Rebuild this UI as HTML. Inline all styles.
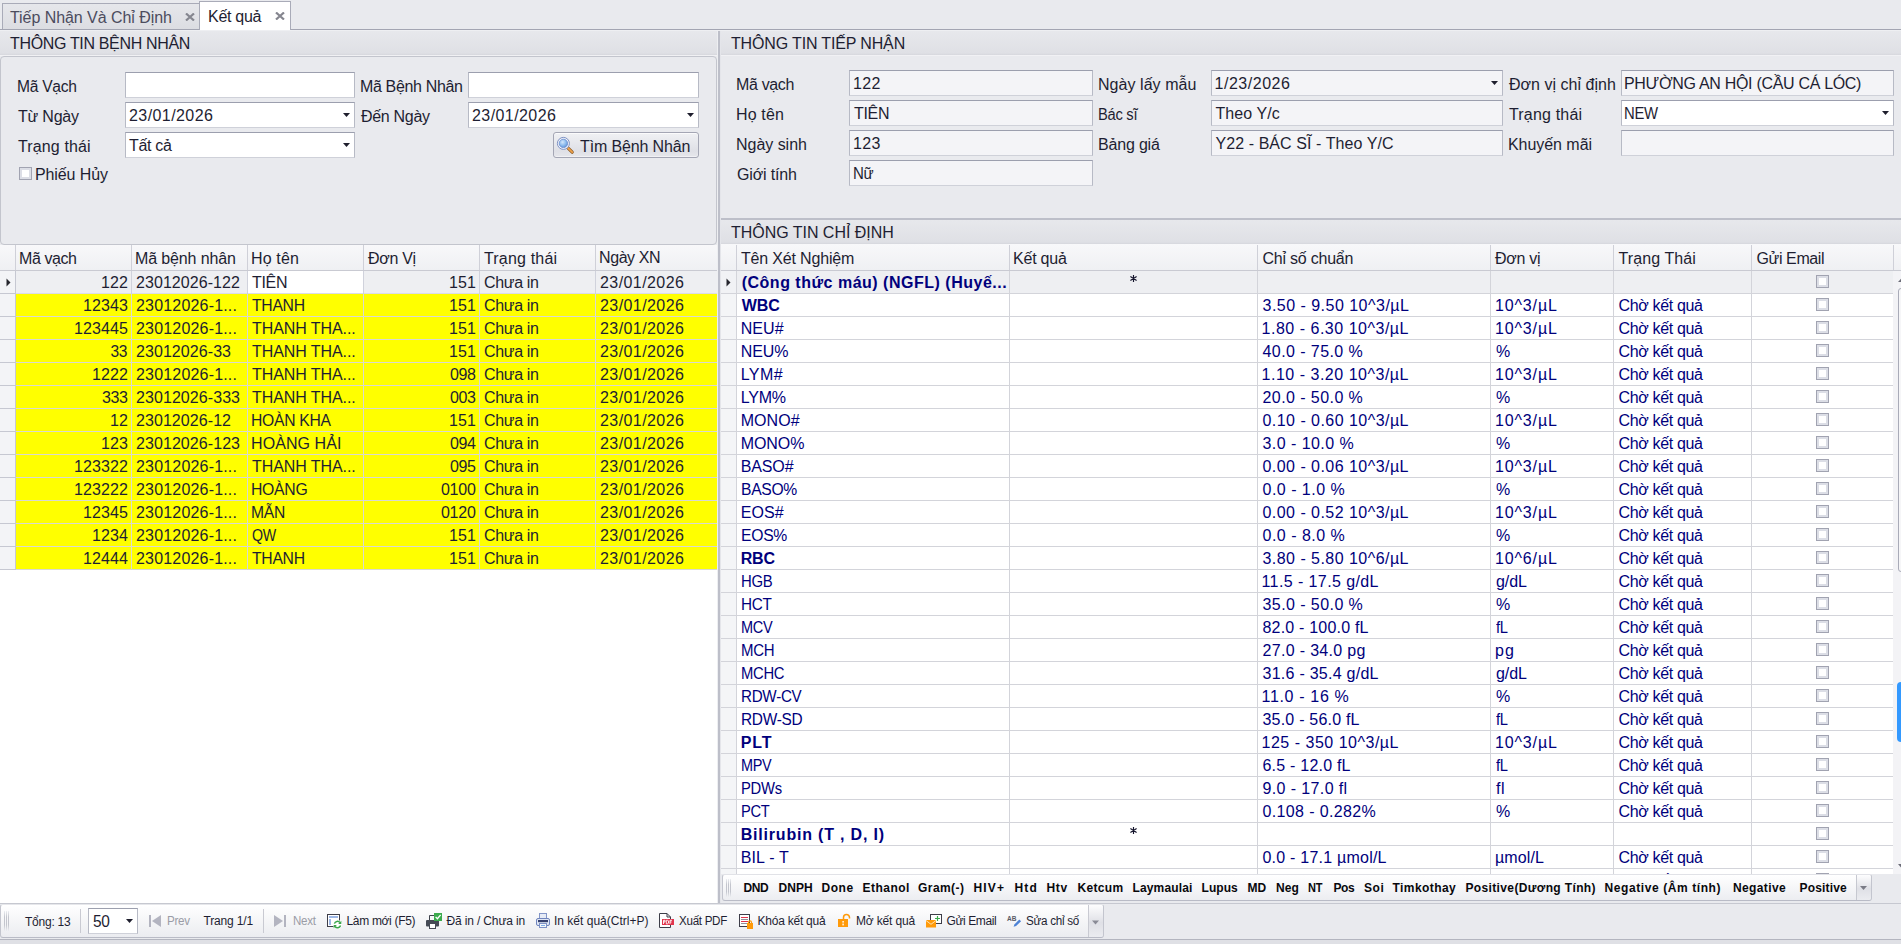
<!DOCTYPE html><html lang="vi"><head><meta charset="utf-8"><title>Kết quả</title><style>
html,body{margin:0;padding:0}
body{width:1901px;height:944px;overflow:hidden;background:#e9eaee;font-family:"Liberation Sans", sans-serif;}
#r{position:relative;width:1901px;height:944px;overflow:hidden}
#r>div,#r>svg,#r>span{position:absolute;display:block}
#r>span{white-space:nowrap;line-height:20px;height:20px}

</style></head><body><div id="r">
<div style="left:0px;top:0px;width:1901px;height:31px;background:#e9eaee"></div>
<div style="left:0px;top:29px;width:1901px;height:1px;background:#a3a5b2"></div>
<div style="left:0px;top:30px;width:1901px;height:1px;background:#eeeff2"></div>
<div style="left:2px;top:3px;width:198px;height:26px;background:linear-gradient(#e6e7eb,#dcdde2);border:1px solid #a9abb8;border-bottom:none;box-sizing:border-box"></div>
<span id="t0" style="top:7.56px;font-size:16px;color:#4c4c5e;letter-spacing:-0.057px;left:10.00px;">Tiếp Nhận Và Chỉ Định</span>
<div style="left:199px;top:1px;width:92px;height:29px;background:#fff;border:1px solid #a9abb8;border-bottom:none;box-sizing:border-box"></div>
<span id="t1" style="top:6.56px;font-size:16px;color:#1e1e32;letter-spacing:-0.293px;left:208.00px;">Kết quả</span>
<svg style="left:184.5px;top:12.5px" width="10" height="8" viewBox="0 0 10 8"><path d="M1 0.5L9 7.5M9 0.5L1 7.5" stroke="#85868f" stroke-width="2.2" fill="none"/></svg>
<svg style="left:274.5px;top:11.5px" width="10" height="8" viewBox="0 0 10 8"><path d="M1 0.5L9 7.5M9 0.5L1 7.5" stroke="#85868f" stroke-width="2.2" fill="none"/></svg>
<div style="left:0px;top:31px;width:718px;height:24px;background:linear-gradient(#e7e8ec,#dfe0e5 92%,#d6d7dd)"></div>
<div style="left:0px;top:55px;width:718px;height:1px;background:#f1f1f4"></div>
<span id="t2" style="top:33.56px;font-size:16px;color:#1e1e32;letter-spacing:-0.340px;left:10.00px;">THÔNG TIN BỆNH NHÂN</span>
<div style="left:0px;top:56px;width:717px;height:189px;background:#e9eaee;border:1px solid #c3c5cd;border-radius:4px;box-sizing:border-box"></div>
<div style="left:125px;top:72px;width:230px;height:26px;background:#fff;border:1px solid #b7bac5;border-top-color:#9c9fae;border-bottom-color:#cfd1d9;box-sizing:border-box"></div>
<div style="left:125px;top:102px;width:230px;height:26px;background:#fff;border:1px solid #b7bac5;border-top-color:#9c9fae;border-bottom-color:#cfd1d9;box-sizing:border-box"></div>
<svg style="left:343px;top:113px" width="7" height="4" viewBox="0 0 7 4"><path d="M0 0H7L3.5 4Z" fill="#1e1e2d"/></svg>
<div style="left:125px;top:132px;width:230px;height:26px;background:#fff;border:1px solid #b7bac5;border-top-color:#9c9fae;border-bottom-color:#cfd1d9;box-sizing:border-box"></div>
<svg style="left:343px;top:143px" width="7" height="4" viewBox="0 0 7 4"><path d="M0 0H7L3.5 4Z" fill="#1e1e2d"/></svg>
<div style="left:468px;top:72px;width:231px;height:26px;background:#fff;border:1px solid #b7bac5;border-top-color:#9c9fae;border-bottom-color:#cfd1d9;box-sizing:border-box"></div>
<div style="left:468px;top:102px;width:231px;height:26px;background:#fff;border:1px solid #b7bac5;border-top-color:#9c9fae;border-bottom-color:#cfd1d9;box-sizing:border-box"></div>
<svg style="left:687px;top:113px" width="7" height="4" viewBox="0 0 7 4"><path d="M0 0H7L3.5 4Z" fill="#1e1e2d"/></svg>
<span id="t3" style="top:77.06px;font-size:16px;color:#1e1e32;letter-spacing:-0.300px;transform:scaleX(0.9757);transform-origin:0 50%;left:17.02px;">Mã Vạch</span>
<span id="t4" style="top:107.06px;font-size:16px;color:#1e1e32;letter-spacing:-0.214px;left:18.00px;">Từ Ngày</span>
<span id="t5" style="top:137.06px;font-size:16px;color:#1e1e32;letter-spacing:0.123px;left:18.00px;">Trạng thái</span>
<span id="t6" style="top:77.06px;font-size:16px;color:#1e1e32;letter-spacing:-0.349px;left:360.00px;">Mã Bệnh Nhân</span>
<span id="t7" style="top:107.06px;font-size:16px;color:#1e1e32;letter-spacing:-0.307px;left:361.00px;">Đến Ngày</span>
<span id="t8" style="top:106.06px;font-size:16px;color:#1e1e32;letter-spacing:0.424px;left:129.00px;">23/01/2026</span>
<span id="t9" style="top:136.06px;font-size:16px;color:#1e1e32;letter-spacing:-0.312px;left:129.00px;">Tất cả</span>
<span id="t10" style="top:106.06px;font-size:16px;color:#1e1e32;letter-spacing:0.424px;left:472.00px;">23/01/2026</span>
<div style="left:19px;top:167px;width:13px;height:13px;background:#fff;border:1px solid #a1a3b1;box-sizing:border-box;box-shadow:inset 0 0 0 2px #dcdee6"></div>
<span id="t11" style="top:165.06px;font-size:16px;color:#1e1e32;letter-spacing:-0.103px;left:35.00px;">Phiếu Hủy</span>
<div style="left:553px;top:132px;width:146px;height:26px;background:linear-gradient(#f0f1f4,#dfe0e6 75%,#e6e7eb);border:1px solid #a4a6b4;border-radius:3px;box-sizing:border-box;box-shadow:inset 0 1px 0 #fbfbfc,inset 0 -1px 0 #f1f1f4"></div>
<svg style="left:553px;top:132px" width="30" height="26" viewBox="553 132 30 26">
<defs><radialGradient id="lens" cx="40%" cy="35%" r="70%"><stop offset="0" stop-color="#d4e6fa"/><stop offset="0.55" stop-color="#8dbcee"/><stop offset="1" stop-color="#5f8fd6"/></radialGradient></defs>
<path d="M567.6 147.6L572.2 152.2" stroke="#8a5a24" stroke-width="3.2" stroke-linecap="round"/>
<path d="M567.6 147.6L572.2 152.2" stroke="#f0a24a" stroke-width="1.8" stroke-linecap="round"/>
<circle cx="563.4" cy="143.4" r="6" fill="#f2f5fb" stroke="#7d90c2" stroke-width="1"/>
<circle cx="563.4" cy="143.4" r="4.2" fill="url(#lens)" stroke="#6b8ccc" stroke-width="0.8"/>
</svg>
<span id="t12" style="top:137.06px;font-size:16px;color:#1e1e32;letter-spacing:-0.138px;left:580.00px;">Tìm Bệnh Nhân</span>
<div style="left:0px;top:245px;width:718px;height:659px;background:#fff"></div>
<div style="left:0px;top:245px;width:717px;height:25px;background:linear-gradient(#f8f8fa,#eff0f3)"></div>
<div style="left:0px;top:270px;width:717px;height:1px;background:#c9cad2"></div>
<div style="left:15px;top:245px;width:1px;height:25px;background:#cfd0d8"></div>
<div style="left:131px;top:245px;width:1px;height:25px;background:#cfd0d8"></div>
<div style="left:247px;top:245px;width:1px;height:25px;background:#cfd0d8"></div>
<div style="left:363px;top:245px;width:1px;height:25px;background:#cfd0d8"></div>
<div style="left:479px;top:245px;width:1px;height:25px;background:#cfd0d8"></div>
<div style="left:595px;top:245px;width:1px;height:25px;background:#cfd0d8"></div>
<span id="t13" style="top:248.56px;font-size:16px;color:#1e1e32;letter-spacing:-0.428px;left:19.00px;">Mã vạch</span>
<span id="t14" style="top:248.56px;font-size:16px;color:#1e1e32;letter-spacing:-0.128px;left:135.00px;">Mã bệnh nhân</span>
<span id="t15" style="top:248.56px;font-size:16px;color:#1e1e32;letter-spacing:0.152px;left:251.00px;">Họ tên</span>
<span id="t16" style="top:248.56px;font-size:16px;color:#1e1e32;letter-spacing:-0.312px;left:368.00px;">Đơn Vị</span>
<span id="t17" style="top:248.56px;font-size:16px;color:#1e1e32;letter-spacing:0.179px;left:484.00px;">Trạng thái</span>
<span id="t18" style="top:247.56px;font-size:16px;color:#1e1e32;letter-spacing:-0.411px;left:599.00px;">Ngày XN</span>
<div style="left:0px;top:271px;width:717px;height:22px;background:#eeeff2"></div>
<div style="left:247px;top:271px;width:116px;height:22px;background:#fff"></div>
<div style="left:0px;top:271px;width:15px;height:22px;background:#f3f4f7"></div>
<div style="left:0px;top:293px;width:717px;height:1px;background:#dcddE6"></div>
<div style="left:0px;top:293px;width:15px;height:1px;background:#c6c8d2"></div>
<span id="t19" style="top:272.56px;font-size:16px;color:#1e1e32;letter-spacing:0.152px;right:1772.95px;">122</span>
<span id="t20" style="top:272.56px;font-size:16px;color:#1e1e32;letter-spacing:0.062px;left:136.00px;">23012026-122</span>
<span id="t21" style="top:272.56px;font-size:16px;color:#1e1e32;letter-spacing:-0.297px;left:252.00px;">TIÊN</span>
<span id="t22" style="top:272.56px;font-size:16px;color:#1e1e32;letter-spacing:0.152px;right:1424.95px;">151</span>
<span id="t23" style="top:272.56px;font-size:16px;color:#1e1e32;letter-spacing:-0.344px;left:484.00px;">Chưa in</span>
<span id="t24" style="top:272.56px;font-size:16px;color:#1e1e32;letter-spacing:0.424px;left:600.00px;">23/01/2026</span>
<div style="left:16px;top:294px;width:701px;height:22px;background:#ffff00"></div>
<div style="left:0px;top:294px;width:15px;height:22px;background:#f3f4f7"></div>
<div style="left:0px;top:316px;width:717px;height:1px;background:#d9d9d2"></div>
<div style="left:0px;top:316px;width:15px;height:1px;background:#c6c8d2"></div>
<span id="t25" style="top:295.56px;font-size:16px;color:#1e1e32;letter-spacing:0.127px;right:1772.97px;">12343</span>
<span id="t26" style="top:295.56px;font-size:16px;color:#1e1e32;letter-spacing:0.183px;left:136.00px;">23012026-1...</span>
<span id="t27" style="top:295.56px;font-size:16px;color:#1e1e32;letter-spacing:-0.300px;transform:scaleX(0.9840);transform-origin:0 50%;left:252.00px;">THANH</span>
<span id="t28" style="top:295.56px;font-size:16px;color:#1e1e32;letter-spacing:0.152px;right:1424.95px;">151</span>
<span id="t29" style="top:295.56px;font-size:16px;color:#1e1e32;letter-spacing:-0.344px;left:484.00px;">Chưa in</span>
<span id="t30" style="top:295.56px;font-size:16px;color:#1e1e32;letter-spacing:0.424px;left:600.00px;">23/01/2026</span>
<div style="left:16px;top:317px;width:701px;height:22px;background:#ffff00"></div>
<div style="left:0px;top:317px;width:15px;height:22px;background:#f3f4f7"></div>
<div style="left:0px;top:339px;width:717px;height:1px;background:#d9d9d2"></div>
<div style="left:0px;top:339px;width:15px;height:1px;background:#c6c8d2"></div>
<span id="t31" style="top:318.56px;font-size:16px;color:#1e1e32;letter-spacing:0.122px;right:1772.98px;">123445</span>
<span id="t32" style="top:318.56px;font-size:16px;color:#1e1e32;letter-spacing:0.183px;left:136.00px;">23012026-1...</span>
<span id="t33" style="top:318.56px;font-size:16px;color:#1e1e32;letter-spacing:-0.077px;left:252.00px;">THANH THA...</span>
<span id="t34" style="top:318.56px;font-size:16px;color:#1e1e32;letter-spacing:0.152px;right:1424.95px;">151</span>
<span id="t35" style="top:318.56px;font-size:16px;color:#1e1e32;letter-spacing:-0.344px;left:484.00px;">Chưa in</span>
<span id="t36" style="top:318.56px;font-size:16px;color:#1e1e32;letter-spacing:0.424px;left:600.00px;">23/01/2026</span>
<div style="left:16px;top:340px;width:701px;height:22px;background:#ffff00"></div>
<div style="left:0px;top:340px;width:15px;height:22px;background:#f3f4f7"></div>
<div style="left:0px;top:362px;width:717px;height:1px;background:#d9d9d2"></div>
<div style="left:0px;top:362px;width:15px;height:1px;background:#c6c8d2"></div>
<span id="t37" style="top:341.56px;font-size:16px;color:#1e1e32;letter-spacing:-0.300px;transform:scaleX(0.9717);transform-origin:100% 50%;right:1773.39px;">33</span>
<span id="t38" style="top:341.56px;font-size:16px;color:#1e1e32;letter-spacing:0.069px;left:136.00px;">23012026-33</span>
<span id="t39" style="top:341.56px;font-size:16px;color:#1e1e32;letter-spacing:-0.077px;left:252.00px;">THANH THA...</span>
<span id="t40" style="top:341.56px;font-size:16px;color:#1e1e32;letter-spacing:0.152px;right:1424.95px;">151</span>
<span id="t41" style="top:341.56px;font-size:16px;color:#1e1e32;letter-spacing:-0.344px;left:484.00px;">Chưa in</span>
<span id="t42" style="top:341.56px;font-size:16px;color:#1e1e32;letter-spacing:0.424px;left:600.00px;">23/01/2026</span>
<div style="left:16px;top:363px;width:701px;height:22px;background:#ffff00"></div>
<div style="left:0px;top:363px;width:15px;height:22px;background:#f3f4f7"></div>
<div style="left:0px;top:385px;width:717px;height:1px;background:#d9d9d2"></div>
<div style="left:0px;top:385px;width:15px;height:1px;background:#c6c8d2"></div>
<span id="t43" style="top:364.56px;font-size:16px;color:#1e1e32;letter-spacing:0.135px;right:1772.97px;">1222</span>
<span id="t44" style="top:364.56px;font-size:16px;color:#1e1e32;letter-spacing:0.183px;left:136.00px;">23012026-1...</span>
<span id="t45" style="top:364.56px;font-size:16px;color:#1e1e32;letter-spacing:-0.077px;left:252.00px;">THANH THA...</span>
<span id="t46" style="top:364.56px;font-size:16px;color:#1e1e32;letter-spacing:-0.348px;right:1425.45px;">098</span>
<span id="t47" style="top:364.56px;font-size:16px;color:#1e1e32;letter-spacing:-0.344px;left:484.00px;">Chưa in</span>
<span id="t48" style="top:364.56px;font-size:16px;color:#1e1e32;letter-spacing:0.424px;left:600.00px;">23/01/2026</span>
<div style="left:16px;top:386px;width:701px;height:22px;background:#ffff00"></div>
<div style="left:0px;top:386px;width:15px;height:22px;background:#f3f4f7"></div>
<div style="left:0px;top:408px;width:717px;height:1px;background:#d9d9d2"></div>
<div style="left:0px;top:408px;width:15px;height:1px;background:#c6c8d2"></div>
<span id="t49" style="top:387.56px;font-size:16px;color:#1e1e32;letter-spacing:-0.348px;right:1773.45px;">333</span>
<span id="t50" style="top:387.56px;font-size:16px;color:#1e1e32;letter-spacing:0.072px;left:136.00px;">23012026-333</span>
<span id="t51" style="top:387.56px;font-size:16px;color:#1e1e32;letter-spacing:-0.077px;left:252.00px;">THANH THA...</span>
<span id="t52" style="top:387.56px;font-size:16px;color:#1e1e32;letter-spacing:-0.348px;right:1425.45px;">003</span>
<span id="t53" style="top:387.56px;font-size:16px;color:#1e1e32;letter-spacing:-0.344px;left:484.00px;">Chưa in</span>
<span id="t54" style="top:387.56px;font-size:16px;color:#1e1e32;letter-spacing:0.424px;left:600.00px;">23/01/2026</span>
<div style="left:16px;top:409px;width:701px;height:22px;background:#ffff00"></div>
<div style="left:0px;top:409px;width:15px;height:22px;background:#f3f4f7"></div>
<div style="left:0px;top:431px;width:717px;height:1px;background:#d9d9d2"></div>
<div style="left:0px;top:431px;width:15px;height:1px;background:#c6c8d2"></div>
<span id="t55" style="top:410.56px;font-size:16px;color:#1e1e32;letter-spacing:0.202px;right:1772.90px;">12</span>
<span id="t56" style="top:410.56px;font-size:16px;color:#1e1e32;letter-spacing:0.069px;left:136.00px;">23012026-12</span>
<span id="t57" style="top:410.56px;font-size:16px;color:#1e1e32;letter-spacing:-0.300px;transform:scaleX(0.9815);transform-origin:0 50%;left:251.02px;">HOÀN KHA</span>
<span id="t58" style="top:410.56px;font-size:16px;color:#1e1e32;letter-spacing:0.152px;right:1424.95px;">151</span>
<span id="t59" style="top:410.56px;font-size:16px;color:#1e1e32;letter-spacing:-0.344px;left:484.00px;">Chưa in</span>
<span id="t60" style="top:410.56px;font-size:16px;color:#1e1e32;letter-spacing:0.424px;left:600.00px;">23/01/2026</span>
<div style="left:16px;top:432px;width:701px;height:22px;background:#ffff00"></div>
<div style="left:0px;top:432px;width:15px;height:22px;background:#f3f4f7"></div>
<div style="left:0px;top:454px;width:717px;height:1px;background:#d9d9d2"></div>
<div style="left:0px;top:454px;width:15px;height:1px;background:#c6c8d2"></div>
<span id="t61" style="top:433.56px;font-size:16px;color:#1e1e32;letter-spacing:0.152px;right:1772.95px;">123</span>
<span id="t62" style="top:433.56px;font-size:16px;color:#1e1e32;letter-spacing:0.072px;left:136.00px;">23012026-123</span>
<span id="t63" style="top:433.56px;font-size:16px;color:#1e1e32;letter-spacing:0.082px;left:251.00px;">HOÀNG HẢI</span>
<span id="t64" style="top:433.56px;font-size:16px;color:#1e1e32;letter-spacing:-0.348px;right:1425.45px;">094</span>
<span id="t65" style="top:433.56px;font-size:16px;color:#1e1e32;letter-spacing:-0.344px;left:484.00px;">Chưa in</span>
<span id="t66" style="top:433.56px;font-size:16px;color:#1e1e32;letter-spacing:0.424px;left:600.00px;">23/01/2026</span>
<div style="left:16px;top:455px;width:701px;height:22px;background:#ffff00"></div>
<div style="left:0px;top:455px;width:15px;height:22px;background:#f3f4f7"></div>
<div style="left:0px;top:477px;width:717px;height:1px;background:#d9d9d2"></div>
<div style="left:0px;top:477px;width:15px;height:1px;background:#c6c8d2"></div>
<span id="t67" style="top:456.56px;font-size:16px;color:#1e1e32;letter-spacing:0.122px;right:1772.98px;">123322</span>
<span id="t68" style="top:456.56px;font-size:16px;color:#1e1e32;letter-spacing:0.183px;left:136.00px;">23012026-1...</span>
<span id="t69" style="top:456.56px;font-size:16px;color:#1e1e32;letter-spacing:-0.077px;left:252.00px;">THANH THA...</span>
<span id="t70" style="top:456.56px;font-size:16px;color:#1e1e32;letter-spacing:-0.348px;right:1425.45px;">095</span>
<span id="t71" style="top:456.56px;font-size:16px;color:#1e1e32;letter-spacing:-0.344px;left:484.00px;">Chưa in</span>
<span id="t72" style="top:456.56px;font-size:16px;color:#1e1e32;letter-spacing:0.424px;left:600.00px;">23/01/2026</span>
<div style="left:16px;top:478px;width:701px;height:22px;background:#ffff00"></div>
<div style="left:0px;top:478px;width:15px;height:22px;background:#f3f4f7"></div>
<div style="left:0px;top:500px;width:717px;height:1px;background:#d9d9d2"></div>
<div style="left:0px;top:500px;width:15px;height:1px;background:#c6c8d2"></div>
<span id="t73" style="top:479.56px;font-size:16px;color:#1e1e32;letter-spacing:0.122px;right:1772.98px;">123222</span>
<span id="t74" style="top:479.56px;font-size:16px;color:#1e1e32;letter-spacing:0.183px;left:136.00px;">23012026-1...</span>
<span id="t75" style="top:479.56px;font-size:16px;color:#1e1e32;letter-spacing:-0.300px;transform:scaleX(0.9870);transform-origin:0 50%;left:251.01px;">HOÀNG</span>
<span id="t76" style="top:479.56px;font-size:16px;color:#1e1e32;letter-spacing:-0.198px;right:1425.30px;">0100</span>
<span id="t77" style="top:479.56px;font-size:16px;color:#1e1e32;letter-spacing:-0.344px;left:484.00px;">Chưa in</span>
<span id="t78" style="top:479.56px;font-size:16px;color:#1e1e32;letter-spacing:0.424px;left:600.00px;">23/01/2026</span>
<div style="left:16px;top:501px;width:701px;height:22px;background:#ffff00"></div>
<div style="left:0px;top:501px;width:15px;height:22px;background:#f3f4f7"></div>
<div style="left:0px;top:523px;width:717px;height:1px;background:#d9d9d2"></div>
<div style="left:0px;top:523px;width:15px;height:1px;background:#c6c8d2"></div>
<span id="t79" style="top:502.56px;font-size:16px;color:#1e1e32;letter-spacing:0.127px;right:1772.97px;">12345</span>
<span id="t80" style="top:502.56px;font-size:16px;color:#1e1e32;letter-spacing:0.183px;left:136.00px;">23012026-1...</span>
<span id="t81" style="top:502.56px;font-size:16px;color:#1e1e32;letter-spacing:-0.300px;transform:scaleX(0.9790);transform-origin:0 50%;left:251.02px;">MẪN</span>
<span id="t82" style="top:502.56px;font-size:16px;color:#1e1e32;letter-spacing:-0.198px;right:1425.30px;">0120</span>
<span id="t83" style="top:502.56px;font-size:16px;color:#1e1e32;letter-spacing:-0.344px;left:484.00px;">Chưa in</span>
<span id="t84" style="top:502.56px;font-size:16px;color:#1e1e32;letter-spacing:0.424px;left:600.00px;">23/01/2026</span>
<div style="left:16px;top:524px;width:701px;height:22px;background:#ffff00"></div>
<div style="left:0px;top:524px;width:15px;height:22px;background:#f3f4f7"></div>
<div style="left:0px;top:546px;width:717px;height:1px;background:#d9d9d2"></div>
<div style="left:0px;top:546px;width:15px;height:1px;background:#c6c8d2"></div>
<span id="t85" style="top:525.56px;font-size:16px;color:#1e1e32;letter-spacing:0.135px;right:1772.97px;">1234</span>
<span id="t86" style="top:525.56px;font-size:16px;color:#1e1e32;letter-spacing:0.183px;left:136.00px;">23012026-1...</span>
<span id="t87" style="top:525.56px;font-size:16px;color:#1e1e32;letter-spacing:-0.300px;transform:scaleX(0.8882);transform-origin:0 50%;left:252.00px;">QW</span>
<span id="t88" style="top:525.56px;font-size:16px;color:#1e1e32;letter-spacing:0.152px;right:1424.95px;">151</span>
<span id="t89" style="top:525.56px;font-size:16px;color:#1e1e32;letter-spacing:-0.344px;left:484.00px;">Chưa in</span>
<span id="t90" style="top:525.56px;font-size:16px;color:#1e1e32;letter-spacing:0.424px;left:600.00px;">23/01/2026</span>
<div style="left:16px;top:547px;width:701px;height:22px;background:#ffff00"></div>
<div style="left:0px;top:547px;width:15px;height:22px;background:#f3f4f7"></div>
<div style="left:0px;top:569px;width:717px;height:1px;background:#d9d9d2"></div>
<div style="left:0px;top:569px;width:15px;height:1px;background:#c6c8d2"></div>
<span id="t91" style="top:548.56px;font-size:16px;color:#1e1e32;letter-spacing:0.127px;right:1772.97px;">12444</span>
<span id="t92" style="top:548.56px;font-size:16px;color:#1e1e32;letter-spacing:0.183px;left:136.00px;">23012026-1...</span>
<span id="t93" style="top:548.56px;font-size:16px;color:#1e1e32;letter-spacing:-0.300px;transform:scaleX(0.9840);transform-origin:0 50%;left:252.00px;">THANH</span>
<span id="t94" style="top:548.56px;font-size:16px;color:#1e1e32;letter-spacing:0.152px;right:1424.95px;">151</span>
<span id="t95" style="top:548.56px;font-size:16px;color:#1e1e32;letter-spacing:-0.344px;left:484.00px;">Chưa in</span>
<span id="t96" style="top:548.56px;font-size:16px;color:#1e1e32;letter-spacing:0.424px;left:600.00px;">23/01/2026</span>
<div style="left:15px;top:271px;width:1px;height:23px;background:#d0d2dc"></div>
<div style="left:15px;top:294px;width:1px;height:276px;background:#d9d9d2"></div>
<div style="left:131px;top:271px;width:1px;height:23px;background:#d0d2dc"></div>
<div style="left:131px;top:294px;width:1px;height:276px;background:#d9d9d2"></div>
<div style="left:247px;top:271px;width:1px;height:23px;background:#d0d2dc"></div>
<div style="left:247px;top:294px;width:1px;height:276px;background:#d9d9d2"></div>
<div style="left:363px;top:271px;width:1px;height:23px;background:#d0d2dc"></div>
<div style="left:363px;top:294px;width:1px;height:276px;background:#d9d9d2"></div>
<div style="left:479px;top:271px;width:1px;height:23px;background:#d0d2dc"></div>
<div style="left:479px;top:294px;width:1px;height:276px;background:#d9d9d2"></div>
<div style="left:595px;top:271px;width:1px;height:23px;background:#d0d2dc"></div>
<div style="left:595px;top:294px;width:1px;height:276px;background:#d9d9d2"></div>
<div style="left:15px;top:271px;width:1px;height:299px;background:#c6c8d2"></div>
<svg style="left:6px;top:278px" width="5" height="9" viewBox="0 0 5 9"><path d="M0.5 0.5L4.5 4.5L0.5 8.5Z" fill="#26262e"/></svg>
<div style="left:717px;top:31px;width:1px;height:873px;background:#eeeff2"></div>
<div style="left:718px;top:31px;width:2px;height:873px;background:#bdbfc9"></div>
<div style="left:720px;top:31px;width:1px;height:873px;background:#e4e5ea"></div>
<div style="left:721px;top:31px;width:1180px;height:24px;background:linear-gradient(#e7e8ec,#dfe0e5 92%,#d6d7dd)"></div>
<div style="left:721px;top:55px;width:1180px;height:1px;background:#f1f1f4"></div>
<span id="t97" style="top:33.56px;font-size:16px;color:#1e1e32;letter-spacing:-0.151px;left:731.00px;">THÔNG TIN TIẾP NHẬN</span>
<div style="left:721px;top:56px;width:1180px;height:162px;background:#e9eaee"></div>
<div style="left:849px;top:70px;width:244px;height:26px;background:#f4f4f7;border:1px solid #b7bac5;border-top-color:#9c9fae;border-bottom-color:#cfd1d9;box-sizing:border-box"></div>
<span id="t98" style="top:75.06px;font-size:16px;color:#1e1e32;letter-spacing:-0.345px;left:736.00px;">Mã vạch</span>
<span id="t99" style="top:74.06px;font-size:16px;color:#1e1e32;letter-spacing:0.352px;left:853.00px;">122</span>
<div style="left:849px;top:100px;width:244px;height:26px;background:#f4f4f7;border:1px solid #b7bac5;border-top-color:#9c9fae;border-bottom-color:#cfd1d9;box-sizing:border-box"></div>
<span id="t100" style="top:105.06px;font-size:16px;color:#1e1e32;letter-spacing:0.152px;left:736.00px;">Họ tên</span>
<span id="t101" style="top:104.06px;font-size:16px;color:#1e1e32;letter-spacing:-0.297px;left:854.00px;">TIÊN</span>
<div style="left:849px;top:130px;width:244px;height:26px;background:#f4f4f7;border:1px solid #b7bac5;border-top-color:#9c9fae;border-bottom-color:#cfd1d9;box-sizing:border-box"></div>
<span id="t102" style="top:135.06px;font-size:16px;color:#1e1e32;letter-spacing:-0.031px;left:736.00px;">Ngày sinh</span>
<span id="t103" style="top:134.06px;font-size:16px;color:#1e1e32;letter-spacing:0.352px;left:853.00px;">123</span>
<div style="left:849px;top:160px;width:244px;height:26px;background:#f4f4f7;border:1px solid #b7bac5;border-top-color:#9c9fae;border-bottom-color:#cfd1d9;box-sizing:border-box"></div>
<span id="t104" style="top:165.06px;font-size:16px;color:#1e1e32;letter-spacing:-0.160px;left:737.00px;">Giới tính</span>
<span id="t105" style="top:164.06px;font-size:16px;color:#1e1e32;letter-spacing:-0.300px;transform:scaleX(0.9410);transform-origin:0 50%;left:853.06px;">Nữ</span>
<div style="left:1211px;top:70px;width:292px;height:26px;background:#f4f4f7;border:1px solid #b7bac5;border-top-color:#9c9fae;border-bottom-color:#cfd1d9;box-sizing:border-box"></div>
<svg style="left:1491px;top:81px" width="7" height="4" viewBox="0 0 7 4"><path d="M0 0H7L3.5 4Z" fill="#1e1e2d"/></svg>
<span id="t106" style="top:75.06px;font-size:16px;color:#1e1e32;letter-spacing:0.053px;left:1098.00px;">Ngày lấy mẫu</span>
<span id="t107" style="top:74.06px;font-size:16px;color:#1e1e32;letter-spacing:0.527px;left:1214.50px;">1/23/2026</span>
<div style="left:1211px;top:100px;width:292px;height:26px;background:#f4f4f7;border:1px solid #b7bac5;border-top-color:#9c9fae;border-bottom-color:#cfd1d9;box-sizing:border-box"></div>
<span id="t108" style="top:105.06px;font-size:16px;color:#1e1e32;letter-spacing:-0.300px;transform:scaleX(0.9192);transform-origin:0 50%;left:1098.08px;">Bác sĩ</span>
<span id="t109" style="top:104.06px;font-size:16px;color:#1e1e32;letter-spacing:0.067px;left:1215.50px;">Theo Y/c</span>
<div style="left:1211px;top:130px;width:292px;height:26px;background:#f4f4f7;border:1px solid #b7bac5;border-top-color:#9c9fae;border-bottom-color:#cfd1d9;box-sizing:border-box"></div>
<span id="t110" style="top:135.06px;font-size:16px;color:#1e1e32;letter-spacing:-0.181px;left:1098.00px;">Bảng giá</span>
<span id="t111" style="top:134.06px;font-size:16px;color:#1e1e32;letter-spacing:0.073px;left:1215.50px;">Y22 - BÁC SĨ - Theo Y/C</span>
<div style="left:1621px;top:70px;width:273px;height:26px;background:#f4f4f7;border:1px solid #b7bac5;border-top-color:#9c9fae;border-bottom-color:#cfd1d9;box-sizing:border-box"></div>
<span id="t112" style="top:75.06px;font-size:16px;color:#1e1e32;letter-spacing:0.026px;left:1509.00px;">Đơn vị chỉ định</span>
<span id="t113" style="top:74.06px;font-size:16px;color:#1e1e32;letter-spacing:-0.310px;left:1624.00px;">PHƯỜNG AN HỘI (CẦU CÁ LÓC)</span>
<div style="left:1621px;top:100px;width:273px;height:26px;background:#fff;border:1px solid #b7bac5;border-top-color:#9c9fae;border-bottom-color:#cfd1d9;box-sizing:border-box"></div>
<svg style="left:1882px;top:111px" width="7" height="4" viewBox="0 0 7 4"><path d="M0 0H7L3.5 4Z" fill="#1e1e2d"/></svg>
<span id="t114" style="top:105.06px;font-size:16px;color:#1e1e32;letter-spacing:0.179px;left:1509.00px;">Trạng thái</span>
<span id="t115" style="top:104.06px;font-size:16px;color:#1e1e32;letter-spacing:-0.300px;transform:scaleX(0.9283);transform-origin:0 50%;left:1624.07px;">NEW</span>
<div style="left:1621px;top:130px;width:273px;height:26px;background:#f4f4f7;border:1px solid #b7bac5;border-top-color:#9c9fae;border-bottom-color:#cfd1d9;box-sizing:border-box"></div>
<span id="t116" style="top:135.06px;font-size:16px;color:#1e1e32;letter-spacing:-0.049px;left:1508.00px;">Khuyến mãi</span>
<div style="left:721px;top:218px;width:1180px;height:2px;background:#bdbfc9"></div>
<div style="left:721px;top:220px;width:1180px;height:24px;background:linear-gradient(#e7e8ec,#dfe0e5 92%,#d6d7dd)"></div>
<span id="t117" style="top:223.06px;font-size:16px;color:#1e1e32;letter-spacing:-0.029px;left:731.00px;">THÔNG TIN CHỈ ĐỊNH</span>
<div style="left:721px;top:244px;width:1180px;height:630px;background:#fff"></div>
<div style="left:721px;top:244px;width:1180px;height:26px;background:linear-gradient(#f8f8fa,#eff0f3)"></div>
<div style="left:721px;top:270px;width:1180px;height:1px;background:#c9cad2"></div>
<div style="left:736px;top:245px;width:1px;height:25px;background:#cfd0d8"></div>
<div style="left:1009px;top:245px;width:1px;height:25px;background:#cfd0d8"></div>
<div style="left:1257px;top:245px;width:1px;height:25px;background:#cfd0d8"></div>
<div style="left:1490px;top:245px;width:1px;height:25px;background:#cfd0d8"></div>
<div style="left:1613px;top:245px;width:1px;height:25px;background:#cfd0d8"></div>
<div style="left:1751px;top:245px;width:1px;height:25px;background:#cfd0d8"></div>
<div style="left:1893px;top:245px;width:1px;height:25px;background:#cfd0d8"></div>
<span id="t118" style="top:248.56px;font-size:16px;color:#1e1e32;letter-spacing:-0.175px;left:741.00px;">Tên Xét Nghiệm</span>
<span id="t119" style="top:248.56px;font-size:16px;color:#1e1e32;letter-spacing:-0.210px;left:1013.00px;">Kết quả</span>
<span id="t120" style="top:248.56px;font-size:16px;color:#1e1e32;letter-spacing:-0.227px;left:1262.50px;">Chỉ số chuẩn</span>
<span id="t121" style="top:248.56px;font-size:16px;color:#1e1e32;letter-spacing:-0.278px;left:1495.00px;">Đơn vị</span>
<span id="t122" style="top:248.56px;font-size:16px;color:#1e1e32;letter-spacing:0.087px;left:1618.50px;">Trạng Thái</span>
<span id="t123" style="top:248.56px;font-size:16px;color:#1e1e32;letter-spacing:-0.389px;left:1756.50px;">Gửi Email</span>
<div style="left:721px;top:271px;width:1172px;height:22px;background:#eeeff2"></div>
<div style="left:721px;top:271px;width:15px;height:22px;background:#f1f2f5"></div>
<div style="left:721px;top:293px;width:1172px;height:1px;background:#d3d4da"></div>
<span id="t124" style="top:272.56px;font-size:16px;color:#00007c;font-weight:bold;letter-spacing:0.505px;left:741.70px;">(Công thức máu) (NGFL) (Huyế...</span>
<svg style="left:1129px;top:274px" width="9" height="9" viewBox="1129 274 9 9"><path d="M1133.5 275.0V282.0M1130.4 276.5L1136.6 280.5M1136.6 276.5L1130.4 280.5" stroke="#15152c" stroke-width="1.15" fill="none"/></svg>
<div style="left:1816px;top:275px;width:13px;height:13px;background:#fff;border:1px solid #a1a3b1;box-sizing:border-box;box-shadow:inset 0 0 0 2px #dcdee6"></div>
<div style="left:721px;top:294px;width:15px;height:22px;background:#f4f5f7"></div>
<div style="left:721px;top:316px;width:1172px;height:1px;background:#d3d4da"></div>
<span id="t125" style="top:295.56px;font-size:16px;color:#00007c;font-weight:bold;letter-spacing:-0.078px;left:741.70px;">WBC</span>
<span id="t126" style="top:295.56px;font-size:16px;color:#00007c;letter-spacing:0.483px;left:1262.50px;">3.50 - 9.50 10^3/µL</span>
<span id="t127" style="top:295.56px;font-size:16px;color:#00007c;letter-spacing:0.855px;left:1495.00px;">10^3/µL</span>
<span id="t128" style="top:295.56px;font-size:16px;color:#00007c;letter-spacing:-0.348px;left:1618.50px;">Chờ kết quả</span>
<div style="left:1816px;top:298px;width:13px;height:13px;background:#fff;border:1px solid #a1a3b1;box-sizing:border-box;box-shadow:inset 0 0 0 2px #dcdee6"></div>
<div style="left:721px;top:317px;width:15px;height:22px;background:#f4f5f7"></div>
<div style="left:721px;top:339px;width:1172px;height:1px;background:#d3d4da"></div>
<span id="t129" style="top:318.56px;font-size:16px;color:#00007c;letter-spacing:0.073px;left:740.70px;">NEU#</span>
<span id="t130" style="top:318.56px;font-size:16px;color:#00007c;letter-spacing:0.516px;left:1261.50px;">1.80 - 6.30 10^3/µL</span>
<span id="t131" style="top:318.56px;font-size:16px;color:#00007c;letter-spacing:0.855px;left:1495.00px;">10^3/µL</span>
<span id="t132" style="top:318.56px;font-size:16px;color:#00007c;letter-spacing:-0.348px;left:1618.50px;">Chờ kết quả</span>
<div style="left:1816px;top:321px;width:13px;height:13px;background:#fff;border:1px solid #a1a3b1;box-sizing:border-box;box-shadow:inset 0 0 0 2px #dcdee6"></div>
<div style="left:721px;top:340px;width:15px;height:22px;background:#f4f5f7"></div>
<div style="left:721px;top:362px;width:1172px;height:1px;background:#d3d4da"></div>
<span id="t133" style="top:341.56px;font-size:16px;color:#00007c;letter-spacing:-0.094px;left:740.70px;">NEU%</span>
<span id="t134" style="top:341.56px;font-size:16px;color:#00007c;letter-spacing:0.421px;left:1262.50px;">40.0 - 75.0 %</span>
<span id="t135" style="top:341.56px;font-size:16px;color:#00007c;left:1496.00px;">%</span>
<span id="t136" style="top:341.56px;font-size:16px;color:#00007c;letter-spacing:-0.348px;left:1618.50px;">Chờ kết quả</span>
<div style="left:1816px;top:344px;width:13px;height:13px;background:#fff;border:1px solid #a1a3b1;box-sizing:border-box;box-shadow:inset 0 0 0 2px #dcdee6"></div>
<div style="left:721px;top:363px;width:15px;height:22px;background:#f4f5f7"></div>
<div style="left:721px;top:385px;width:1172px;height:1px;background:#d3d4da"></div>
<span id="t137" style="top:364.56px;font-size:16px;color:#00007c;letter-spacing:0.430px;left:740.70px;">LYM#</span>
<span id="t138" style="top:364.56px;font-size:16px;color:#00007c;letter-spacing:0.516px;left:1261.50px;">1.10 - 3.20 10^3/µL</span>
<span id="t139" style="top:364.56px;font-size:16px;color:#00007c;letter-spacing:0.855px;left:1495.00px;">10^3/µL</span>
<span id="t140" style="top:364.56px;font-size:16px;color:#00007c;letter-spacing:-0.348px;left:1618.50px;">Chờ kết quả</span>
<div style="left:1816px;top:367px;width:13px;height:13px;background:#fff;border:1px solid #a1a3b1;box-sizing:border-box;box-shadow:inset 0 0 0 2px #dcdee6"></div>
<div style="left:721px;top:386px;width:15px;height:22px;background:#f4f5f7"></div>
<div style="left:721px;top:408px;width:1172px;height:1px;background:#d3d4da"></div>
<span id="t141" style="top:387.56px;font-size:16px;color:#00007c;letter-spacing:-0.204px;left:740.70px;">LYM%</span>
<span id="t142" style="top:387.56px;font-size:16px;color:#00007c;letter-spacing:0.430px;left:1262.50px;">20.0 - 50.0 %</span>
<span id="t143" style="top:387.56px;font-size:16px;color:#00007c;left:1496.00px;">%</span>
<span id="t144" style="top:387.56px;font-size:16px;color:#00007c;letter-spacing:-0.348px;left:1618.50px;">Chờ kết quả</span>
<div style="left:1816px;top:390px;width:13px;height:13px;background:#fff;border:1px solid #a1a3b1;box-sizing:border-box;box-shadow:inset 0 0 0 2px #dcdee6"></div>
<div style="left:721px;top:409px;width:15px;height:22px;background:#f4f5f7"></div>
<div style="left:721px;top:431px;width:1172px;height:1px;background:#d3d4da"></div>
<span id="t145" style="top:410.56px;font-size:16px;color:#00007c;letter-spacing:0.057px;left:740.70px;">MONO#</span>
<span id="t146" style="top:410.56px;font-size:16px;color:#00007c;letter-spacing:0.460px;left:1262.50px;">0.10 - 0.60 10^3/µL</span>
<span id="t147" style="top:410.56px;font-size:16px;color:#00007c;letter-spacing:0.855px;left:1495.00px;">10^3/µL</span>
<span id="t148" style="top:410.56px;font-size:16px;color:#00007c;letter-spacing:-0.348px;left:1618.50px;">Chờ kết quả</span>
<div style="left:1816px;top:413px;width:13px;height:13px;background:#fff;border:1px solid #a1a3b1;box-sizing:border-box;box-shadow:inset 0 0 0 2px #dcdee6"></div>
<div style="left:721px;top:432px;width:15px;height:22px;background:#f4f5f7"></div>
<div style="left:721px;top:454px;width:1172px;height:1px;background:#d3d4da"></div>
<span id="t149" style="top:433.56px;font-size:16px;color:#00007c;letter-spacing:-0.068px;left:740.70px;">MONO%</span>
<span id="t150" style="top:433.56px;font-size:16px;color:#00007c;letter-spacing:0.450px;left:1262.50px;">3.0 - 10.0 %</span>
<span id="t151" style="top:433.56px;font-size:16px;color:#00007c;left:1496.00px;">%</span>
<span id="t152" style="top:433.56px;font-size:16px;color:#00007c;letter-spacing:-0.348px;left:1618.50px;">Chờ kết quả</span>
<div style="left:1816px;top:436px;width:13px;height:13px;background:#fff;border:1px solid #a1a3b1;box-sizing:border-box;box-shadow:inset 0 0 0 2px #dcdee6"></div>
<div style="left:721px;top:455px;width:15px;height:22px;background:#f4f5f7"></div>
<div style="left:721px;top:477px;width:1172px;height:1px;background:#d3d4da"></div>
<span id="t153" style="top:456.56px;font-size:16px;color:#00007c;letter-spacing:-0.115px;left:740.70px;">BASO#</span>
<span id="t154" style="top:456.56px;font-size:16px;color:#00007c;letter-spacing:0.460px;left:1262.50px;">0.00 - 0.06 10^3/µL</span>
<span id="t155" style="top:456.56px;font-size:16px;color:#00007c;letter-spacing:0.855px;left:1495.00px;">10^3/µL</span>
<span id="t156" style="top:456.56px;font-size:16px;color:#00007c;letter-spacing:-0.348px;left:1618.50px;">Chờ kết quả</span>
<div style="left:1816px;top:459px;width:13px;height:13px;background:#fff;border:1px solid #a1a3b1;box-sizing:border-box;box-shadow:inset 0 0 0 2px #dcdee6"></div>
<div style="left:721px;top:478px;width:15px;height:22px;background:#f4f5f7"></div>
<div style="left:721px;top:500px;width:1172px;height:1px;background:#d3d4da"></div>
<span id="t157" style="top:479.56px;font-size:16px;color:#00007c;letter-spacing:-0.300px;transform:scaleX(0.9794);transform-origin:0 50%;left:740.72px;">BASO%</span>
<span id="t158" style="top:479.56px;font-size:16px;color:#00007c;letter-spacing:0.485px;left:1262.50px;">0.0 - 1.0 %</span>
<span id="t159" style="top:479.56px;font-size:16px;color:#00007c;left:1496.00px;">%</span>
<span id="t160" style="top:479.56px;font-size:16px;color:#00007c;letter-spacing:-0.348px;left:1618.50px;">Chờ kết quả</span>
<div style="left:1816px;top:482px;width:13px;height:13px;background:#fff;border:1px solid #a1a3b1;box-sizing:border-box;box-shadow:inset 0 0 0 2px #dcdee6"></div>
<div style="left:721px;top:501px;width:15px;height:22px;background:#f4f5f7"></div>
<div style="left:721px;top:523px;width:1172px;height:1px;background:#d3d4da"></div>
<span id="t161" style="top:502.56px;font-size:16px;color:#00007c;letter-spacing:0.104px;left:740.70px;">EOS#</span>
<span id="t162" style="top:502.56px;font-size:16px;color:#00007c;letter-spacing:0.460px;left:1262.50px;">0.00 - 0.52 10^3/µL</span>
<span id="t163" style="top:502.56px;font-size:16px;color:#00007c;letter-spacing:0.855px;left:1495.00px;">10^3/µL</span>
<span id="t164" style="top:502.56px;font-size:16px;color:#00007c;letter-spacing:-0.348px;left:1618.50px;">Chờ kết quả</span>
<div style="left:1816px;top:505px;width:13px;height:13px;background:#fff;border:1px solid #a1a3b1;box-sizing:border-box;box-shadow:inset 0 0 0 2px #dcdee6"></div>
<div style="left:721px;top:524px;width:15px;height:22px;background:#f4f5f7"></div>
<div style="left:721px;top:546px;width:1172px;height:1px;background:#d3d4da"></div>
<span id="t165" style="top:525.56px;font-size:16px;color:#00007c;letter-spacing:-0.300px;transform:scaleX(0.9828);transform-origin:0 50%;left:740.72px;">EOS%</span>
<span id="t166" style="top:525.56px;font-size:16px;color:#00007c;letter-spacing:0.495px;left:1262.50px;">0.0 - 8.0 %</span>
<span id="t167" style="top:525.56px;font-size:16px;color:#00007c;left:1496.00px;">%</span>
<span id="t168" style="top:525.56px;font-size:16px;color:#00007c;letter-spacing:-0.348px;left:1618.50px;">Chờ kết quả</span>
<div style="left:1816px;top:528px;width:13px;height:13px;background:#fff;border:1px solid #a1a3b1;box-sizing:border-box;box-shadow:inset 0 0 0 2px #dcdee6"></div>
<div style="left:721px;top:547px;width:15px;height:22px;background:#f4f5f7"></div>
<div style="left:721px;top:569px;width:1172px;height:1px;background:#d3d4da"></div>
<span id="t169" style="top:548.56px;font-size:16px;color:#00007c;font-weight:bold;letter-spacing:-0.155px;left:740.70px;">RBC</span>
<span id="t170" style="top:548.56px;font-size:16px;color:#00007c;letter-spacing:0.460px;left:1262.50px;">3.80 - 5.80 10^6/µL</span>
<span id="t171" style="top:548.56px;font-size:16px;color:#00007c;letter-spacing:0.855px;left:1495.00px;">10^6/µL</span>
<span id="t172" style="top:548.56px;font-size:16px;color:#00007c;letter-spacing:-0.348px;left:1618.50px;">Chờ kết quả</span>
<div style="left:1816px;top:551px;width:13px;height:13px;background:#fff;border:1px solid #a1a3b1;box-sizing:border-box;box-shadow:inset 0 0 0 2px #dcdee6"></div>
<div style="left:721px;top:570px;width:15px;height:22px;background:#f4f5f7"></div>
<div style="left:721px;top:592px;width:1172px;height:1px;background:#d3d4da"></div>
<span id="t173" style="top:571.56px;font-size:16px;color:#00007c;letter-spacing:-0.300px;transform:scaleX(0.9290);transform-origin:0 50%;left:740.77px;">HGB</span>
<span id="t174" style="top:571.56px;font-size:16px;color:#00007c;letter-spacing:0.407px;left:1261.50px;">11.5 - 17.5 g/dL</span>
<span id="t175" style="top:571.56px;font-size:16px;color:#00007c;letter-spacing:-0.047px;left:1496.00px;">g/dL</span>
<span id="t176" style="top:571.56px;font-size:16px;color:#00007c;letter-spacing:-0.348px;left:1618.50px;">Chờ kết quả</span>
<div style="left:1816px;top:574px;width:13px;height:13px;background:#fff;border:1px solid #a1a3b1;box-sizing:border-box;box-shadow:inset 0 0 0 2px #dcdee6"></div>
<div style="left:721px;top:593px;width:15px;height:22px;background:#f4f5f7"></div>
<div style="left:721px;top:615px;width:1172px;height:1px;background:#d3d4da"></div>
<span id="t177" style="top:594.56px;font-size:16px;color:#00007c;letter-spacing:-0.300px;transform:scaleX(0.9553);transform-origin:0 50%;left:740.74px;">HCT</span>
<span id="t178" style="top:594.56px;font-size:16px;color:#00007c;letter-spacing:0.430px;left:1262.50px;">35.0 - 50.0 %</span>
<span id="t179" style="top:594.56px;font-size:16px;color:#00007c;left:1496.00px;">%</span>
<span id="t180" style="top:594.56px;font-size:16px;color:#00007c;letter-spacing:-0.348px;left:1618.50px;">Chờ kết quả</span>
<div style="left:1816px;top:597px;width:13px;height:13px;background:#fff;border:1px solid #a1a3b1;box-sizing:border-box;box-shadow:inset 0 0 0 2px #dcdee6"></div>
<div style="left:721px;top:616px;width:15px;height:22px;background:#f4f5f7"></div>
<div style="left:721px;top:638px;width:1172px;height:1px;background:#d3d4da"></div>
<span id="t181" style="top:617.56px;font-size:16px;color:#00007c;letter-spacing:-0.300px;transform:scaleX(0.9072);transform-origin:0 50%;left:740.79px;">MCV</span>
<span id="t182" style="top:617.56px;font-size:16px;color:#00007c;letter-spacing:0.201px;left:1262.50px;">82.0 - 100.0 fL</span>
<span id="t183" style="top:617.56px;font-size:16px;color:#00007c;letter-spacing:-0.300px;transform:scaleX(0.9205);transform-origin:0 50%;left:1496.00px;">fL</span>
<span id="t184" style="top:617.56px;font-size:16px;color:#00007c;letter-spacing:-0.348px;left:1618.50px;">Chờ kết quả</span>
<div style="left:1816px;top:620px;width:13px;height:13px;background:#fff;border:1px solid #a1a3b1;box-sizing:border-box;box-shadow:inset 0 0 0 2px #dcdee6"></div>
<div style="left:721px;top:639px;width:15px;height:22px;background:#f4f5f7"></div>
<div style="left:721px;top:661px;width:1172px;height:1px;background:#d3d4da"></div>
<span id="t185" style="top:640.56px;font-size:16px;color:#00007c;letter-spacing:-0.300px;transform:scaleX(0.9363);transform-origin:0 50%;left:740.76px;">MCH</span>
<span id="t186" style="top:640.56px;font-size:16px;color:#00007c;letter-spacing:0.327px;left:1262.50px;">27.0 - 34.0 pg</span>
<span id="t187" style="top:640.56px;font-size:16px;color:#00007c;letter-spacing:1.202px;left:1495.00px;">pg</span>
<span id="t188" style="top:640.56px;font-size:16px;color:#00007c;letter-spacing:-0.348px;left:1618.50px;">Chờ kết quả</span>
<div style="left:1816px;top:643px;width:13px;height:13px;background:#fff;border:1px solid #a1a3b1;box-sizing:border-box;box-shadow:inset 0 0 0 2px #dcdee6"></div>
<div style="left:721px;top:662px;width:15px;height:22px;background:#f4f5f7"></div>
<div style="left:721px;top:684px;width:1172px;height:1px;background:#d3d4da"></div>
<span id="t189" style="top:663.56px;font-size:16px;color:#00007c;letter-spacing:-0.300px;transform:scaleX(0.9245);transform-origin:0 50%;left:740.78px;">MCHC</span>
<span id="t190" style="top:663.56px;font-size:16px;color:#00007c;letter-spacing:0.261px;left:1262.50px;">31.6 - 35.4 g/dL</span>
<span id="t191" style="top:663.56px;font-size:16px;color:#00007c;letter-spacing:-0.047px;left:1496.00px;">g/dL</span>
<span id="t192" style="top:663.56px;font-size:16px;color:#00007c;letter-spacing:-0.348px;left:1618.50px;">Chờ kết quả</span>
<div style="left:1816px;top:666px;width:13px;height:13px;background:#fff;border:1px solid #a1a3b1;box-sizing:border-box;box-shadow:inset 0 0 0 2px #dcdee6"></div>
<div style="left:721px;top:685px;width:15px;height:22px;background:#f4f5f7"></div>
<div style="left:721px;top:707px;width:1172px;height:1px;background:#d3d4da"></div>
<span id="t193" style="top:686.56px;font-size:16px;color:#00007c;letter-spacing:-0.300px;transform:scaleX(0.9494);transform-origin:0 50%;left:740.75px;">RDW-CV</span>
<span id="t194" style="top:686.56px;font-size:16px;color:#00007c;letter-spacing:0.669px;left:1261.50px;">11.0 - 16 %</span>
<span id="t195" style="top:686.56px;font-size:16px;color:#00007c;left:1496.00px;">%</span>
<span id="t196" style="top:686.56px;font-size:16px;color:#00007c;letter-spacing:-0.348px;left:1618.50px;">Chờ kết quả</span>
<div style="left:1816px;top:689px;width:13px;height:13px;background:#fff;border:1px solid #a1a3b1;box-sizing:border-box;box-shadow:inset 0 0 0 2px #dcdee6"></div>
<div style="left:721px;top:708px;width:15px;height:22px;background:#f4f5f7"></div>
<div style="left:721px;top:730px;width:1172px;height:1px;background:#d3d4da"></div>
<span id="t197" style="top:709.56px;font-size:16px;color:#00007c;letter-spacing:-0.300px;transform:scaleX(0.9628);transform-origin:0 50%;left:740.74px;">RDW-SD</span>
<span id="t198" style="top:709.56px;font-size:16px;color:#00007c;letter-spacing:0.208px;left:1262.50px;">35.0 - 56.0 fL</span>
<span id="t199" style="top:709.56px;font-size:16px;color:#00007c;letter-spacing:-0.300px;transform:scaleX(0.9205);transform-origin:0 50%;left:1496.00px;">fL</span>
<span id="t200" style="top:709.56px;font-size:16px;color:#00007c;letter-spacing:-0.348px;left:1618.50px;">Chờ kết quả</span>
<div style="left:1816px;top:712px;width:13px;height:13px;background:#fff;border:1px solid #a1a3b1;box-sizing:border-box;box-shadow:inset 0 0 0 2px #dcdee6"></div>
<div style="left:721px;top:731px;width:15px;height:22px;background:#f4f5f7"></div>
<div style="left:721px;top:753px;width:1172px;height:1px;background:#d3d4da"></div>
<span id="t201" style="top:732.56px;font-size:16px;color:#00007c;font-weight:bold;letter-spacing:0.871px;left:740.70px;">PLT</span>
<span id="t202" style="top:732.56px;font-size:16px;color:#00007c;letter-spacing:0.511px;left:1261.50px;">125 - 350 10^3/µL</span>
<span id="t203" style="top:732.56px;font-size:16px;color:#00007c;letter-spacing:0.855px;left:1495.00px;">10^3/µL</span>
<span id="t204" style="top:732.56px;font-size:16px;color:#00007c;letter-spacing:-0.348px;left:1618.50px;">Chờ kết quả</span>
<div style="left:1816px;top:735px;width:13px;height:13px;background:#fff;border:1px solid #a1a3b1;box-sizing:border-box;box-shadow:inset 0 0 0 2px #dcdee6"></div>
<div style="left:721px;top:754px;width:15px;height:22px;background:#f4f5f7"></div>
<div style="left:721px;top:776px;width:1172px;height:1px;background:#d3d4da"></div>
<span id="t205" style="top:755.56px;font-size:16px;color:#00007c;letter-spacing:-0.300px;transform:scaleX(0.9012);transform-origin:0 50%;left:740.80px;">MPV</span>
<span id="t206" style="top:755.56px;font-size:16px;color:#00007c;letter-spacing:0.217px;left:1262.50px;">6.5 - 12.0 fL</span>
<span id="t207" style="top:755.56px;font-size:16px;color:#00007c;letter-spacing:-0.300px;transform:scaleX(0.9205);transform-origin:0 50%;left:1496.00px;">fL</span>
<span id="t208" style="top:755.56px;font-size:16px;color:#00007c;letter-spacing:-0.348px;left:1618.50px;">Chờ kết quả</span>
<div style="left:1816px;top:758px;width:13px;height:13px;background:#fff;border:1px solid #a1a3b1;box-sizing:border-box;box-shadow:inset 0 0 0 2px #dcdee6"></div>
<div style="left:721px;top:777px;width:15px;height:22px;background:#f4f5f7"></div>
<div style="left:721px;top:799px;width:1172px;height:1px;background:#d3d4da"></div>
<span id="t209" style="top:778.56px;font-size:16px;color:#00007c;letter-spacing:-0.300px;transform:scaleX(0.9234);transform-origin:0 50%;left:740.78px;">PDWs</span>
<span id="t210" style="top:778.56px;font-size:16px;color:#00007c;letter-spacing:0.384px;left:1262.50px;">9.0 - 17.0 fl</span>
<span id="t211" style="top:778.56px;font-size:16px;color:#00007c;letter-spacing:0.655px;left:1496.00px;">fl</span>
<span id="t212" style="top:778.56px;font-size:16px;color:#00007c;letter-spacing:-0.348px;left:1618.50px;">Chờ kết quả</span>
<div style="left:1816px;top:781px;width:13px;height:13px;background:#fff;border:1px solid #a1a3b1;box-sizing:border-box;box-shadow:inset 0 0 0 2px #dcdee6"></div>
<div style="left:721px;top:800px;width:15px;height:22px;background:#f4f5f7"></div>
<div style="left:721px;top:822px;width:1172px;height:1px;background:#d3d4da"></div>
<span id="t213" style="top:801.56px;font-size:16px;color:#00007c;letter-spacing:-0.300px;transform:scaleX(0.9175);transform-origin:0 50%;left:740.78px;">PCT</span>
<span id="t214" style="top:801.56px;font-size:16px;color:#00007c;letter-spacing:0.369px;left:1262.50px;">0.108 - 0.282%</span>
<span id="t215" style="top:801.56px;font-size:16px;color:#00007c;left:1496.00px;">%</span>
<span id="t216" style="top:801.56px;font-size:16px;color:#00007c;letter-spacing:-0.348px;left:1618.50px;">Chờ kết quả</span>
<div style="left:1816px;top:804px;width:13px;height:13px;background:#fff;border:1px solid #a1a3b1;box-sizing:border-box;box-shadow:inset 0 0 0 2px #dcdee6"></div>
<div style="left:721px;top:823px;width:15px;height:22px;background:#f4f5f7"></div>
<div style="left:721px;top:845px;width:1172px;height:1px;background:#d3d4da"></div>
<span id="t217" style="top:824.56px;font-size:16px;color:#00007c;font-weight:bold;letter-spacing:0.808px;left:740.70px;">Bilirubin (T , D, I)</span>
<svg style="left:1129px;top:826px" width="9" height="9" viewBox="1129 826 9 9"><path d="M1133.5 827.0V834.0M1130.4 828.5L1136.6 832.5M1136.6 828.5L1130.4 832.5" stroke="#15152c" stroke-width="1.15" fill="none"/></svg>
<div style="left:1816px;top:827px;width:13px;height:13px;background:#fff;border:1px solid #a1a3b1;box-sizing:border-box;box-shadow:inset 0 0 0 2px #dcdee6"></div>
<div style="left:721px;top:846px;width:15px;height:22px;background:#f4f5f7"></div>
<div style="left:721px;top:868px;width:1172px;height:1px;background:#d3d4da"></div>
<span id="t218" style="top:847.56px;font-size:16px;color:#00007c;letter-spacing:0.144px;left:740.70px;">BIL - T</span>
<span id="t219" style="top:847.56px;font-size:16px;color:#00007c;letter-spacing:0.225px;left:1262.50px;">0.0 - 17.1 µmol/L</span>
<span id="t220" style="top:847.56px;font-size:16px;color:#00007c;letter-spacing:0.131px;left:1495.00px;">µmol/L</span>
<span id="t221" style="top:847.56px;font-size:16px;color:#00007c;letter-spacing:-0.348px;left:1618.50px;">Chờ kết quả</span>
<div style="left:1816px;top:850px;width:13px;height:13px;background:#fff;border:1px solid #a1a3b1;box-sizing:border-box;box-shadow:inset 0 0 0 2px #dcdee6"></div>
<div style="left:721px;top:869px;width:15px;height:22px;background:#f4f5f7"></div>
<div style="left:721px;top:891px;width:1172px;height:1px;background:#d3d4da"></div>
<span id="t222" style="top:870.56px;font-size:16px;color:#00007c;letter-spacing:0.144px;left:740.70px;">BIL - D</span>
<span id="t223" style="top:870.56px;font-size:16px;color:#00007c;letter-spacing:0.234px;left:1262.50px;">0.0 - 4.3 µmol/L</span>
<span id="t224" style="top:870.56px;font-size:16px;color:#00007c;letter-spacing:0.131px;left:1495.00px;">µmol/L</span>
<span id="t225" style="top:870.56px;font-size:16px;color:#00007c;letter-spacing:-0.348px;left:1618.50px;">Chờ kết quả</span>
<div style="left:1816px;top:873px;width:13px;height:13px;background:#fff;border:1px solid #a1a3b1;box-sizing:border-box;box-shadow:inset 0 0 0 2px #dcdee6"></div>
<div style="left:736px;top:271px;width:1px;height:603px;background:#d3d4da"></div>
<div style="left:1009px;top:271px;width:1px;height:603px;background:#d3d4da"></div>
<div style="left:1257px;top:271px;width:1px;height:603px;background:#d3d4da"></div>
<div style="left:1490px;top:271px;width:1px;height:603px;background:#d3d4da"></div>
<div style="left:1613px;top:271px;width:1px;height:603px;background:#d3d4da"></div>
<div style="left:1751px;top:271px;width:1px;height:603px;background:#d3d4da"></div>
<svg style="left:726px;top:278px" width="5" height="9" viewBox="0 0 5 9"><path d="M0.5 0.5L4.5 4.5L0.5 8.5Z" fill="#26262e"/></svg>
<div style="left:1893px;top:271px;width:8px;height:603px;background:#f3f3f6"></div>
<div style="left:1898px;top:288px;width:10px;height:284px;background:#f6f6f8;border:1px solid #a9abb8;border-radius:3px;box-sizing:border-box"></div>
<svg style="left:1898px;top:277px" width="8" height="5" viewBox="0 0 8 5"><path d="M0 5L4 0.5L8 5Z" fill="#6c6d78"/></svg>
<svg style="left:1898px;top:864px" width="8" height="5" viewBox="0 0 8 5"><path d="M0 0L4 4.5L8 0Z" fill="#6c6d78"/></svg>
<div style="left:1897px;top:682px;width:6px;height:60px;background:#3399ff;border-radius:4px 0 0 4px"></div>
<div style="left:721px;top:874px;width:1180px;height:29px;background:#e9eaee"></div>
<div style="left:722px;top:874px;width:1150px;height:27px;background:linear-gradient(#ffffff,#ecedf1);border:1px solid #c3c5ce;border-top-color:#e1e2e7;border-bottom-color:#b9bbc6;border-radius:3px;box-sizing:border-box"></div>
<div style="left:726px;top:879px;width:1px;height:18px;background:linear-gradient(#eceef2,#c3c5cd 30%,#c3c5cd 70%,#eceef2)"></div>
<div style="left:728px;top:879px;width:1px;height:18px;background:linear-gradient(#eceef2,#c3c5cd 30%,#c3c5cd 70%,#eceef2)"></div>
<div style="left:730px;top:879px;width:1px;height:18px;background:linear-gradient(#eceef2,#c3c5cd 30%,#c3c5cd 70%,#eceef2)"></div>
<div style="left:1857px;top:875px;width:14px;height:25px;background:linear-gradient(#fdfdfe,#dfe0e6 55%,#ebecf0);border-radius:0 3px 3px 0"></div>
<div style="left:1856px;top:875px;width:1px;height:25px;background:#c6c8d0"></div>
<svg style="left:1860px;top:886px" width="7" height="4" viewBox="0 0 7 4"><path d="M0 0H7L3.5 4Z" fill="#7a7b86"/></svg>
<span id="t226" style="top:877.94px;font-size:12px;color:#08080c;font-weight:bold;letter-spacing:-0.416px;left:743.50px;">DND</span>
<span id="t227" style="top:877.94px;font-size:12px;color:#08080c;font-weight:bold;letter-spacing:0.055px;left:778.50px;">DNPH</span>
<span id="t228" style="top:877.94px;font-size:12px;color:#08080c;font-weight:bold;letter-spacing:0.558px;left:821.50px;">Done</span>
<span id="t229" style="top:877.94px;font-size:12px;color:#08080c;font-weight:bold;letter-spacing:0.473px;left:862.50px;">Ethanol</span>
<span id="t230" style="top:877.94px;font-size:12px;color:#08080c;font-weight:bold;letter-spacing:0.443px;left:918.00px;">Gram(-)</span>
<span id="t231" style="top:877.94px;font-size:12px;color:#08080c;font-weight:bold;letter-spacing:1.165px;left:973.50px;">HIV+</span>
<span id="t232" style="top:877.94px;font-size:12px;color:#08080c;font-weight:bold;letter-spacing:1.169px;left:1014.50px;">Htd</span>
<span id="t233" style="top:877.94px;font-size:12px;color:#08080c;font-weight:bold;letter-spacing:0.669px;left:1046.50px;">Htv</span>
<span id="t234" style="top:877.94px;font-size:12px;color:#08080c;font-weight:bold;letter-spacing:0.332px;left:1077.50px;">Ketcum</span>
<span id="t235" style="top:877.94px;font-size:12px;color:#08080c;font-weight:bold;letter-spacing:0.143px;left:1132.50px;">Laymaulai</span>
<span id="t236" style="top:877.94px;font-size:12px;color:#08080c;font-weight:bold;letter-spacing:0.045px;left:1201.50px;">Lupus</span>
<span id="t237" style="top:877.94px;font-size:12px;color:#08080c;font-weight:bold;left:1247.50px;">MD</span>
<span id="t238" style="top:877.94px;font-size:12px;color:#08080c;font-weight:bold;letter-spacing:0.080px;left:1276.00px;">Neg</span>
<span id="t239" style="top:877.94px;font-size:12px;color:#08080c;font-weight:bold;letter-spacing:-0.300px;transform:scaleX(0.9165);transform-origin:0 50%;left:1308.00px;">NT</span>
<span id="t240" style="top:877.94px;font-size:12px;color:#08080c;font-weight:bold;letter-spacing:-0.417px;left:1333.50px;">Pos</span>
<span id="t241" style="top:877.94px;font-size:12px;color:#08080c;font-weight:bold;letter-spacing:0.583px;left:1364.00px;">Soi</span>
<span id="t242" style="top:877.94px;font-size:12px;color:#08080c;font-weight:bold;letter-spacing:0.422px;left:1392.50px;">Timkothay</span>
<span id="t243" style="top:877.94px;font-size:12px;color:#08080c;font-weight:bold;letter-spacing:0.357px;left:1465.50px;">Positive(Dương Tính)</span>
<span id="t244" style="top:877.94px;font-size:12px;color:#08080c;font-weight:bold;letter-spacing:0.588px;left:1604.50px;">Negative (Âm tính)</span>
<span id="t245" style="top:877.94px;font-size:12px;color:#08080c;font-weight:bold;letter-spacing:0.379px;left:1733.00px;">Negative</span>
<span id="t246" style="top:877.94px;font-size:12px;color:#08080c;font-weight:bold;letter-spacing:0.165px;left:1799.50px;">Positive</span>
<div style="left:0px;top:903px;width:1901px;height:1px;background:#c6c8d0"></div>
<div style="left:0px;top:904px;width:1901px;height:35px;background:#e9eaee"></div>
<div style="left:0px;top:939px;width:1901px;height:1px;background:#b3b5bf"></div>
<div style="left:0px;top:940px;width:1901px;height:4px;background:#dfe0e5"></div>
<div style="left:0px;top:904px;width:1104px;height:34px;background:linear-gradient(#ffffff,#ebecf0);border:1px solid #c3c5ce;border-top-color:#e6e7eb;border-bottom-color:#b9bbc6;border-radius:3px;box-sizing:border-box"></div>
<div style="left:4px;top:911px;width:1px;height:20px;background:linear-gradient(#eceef2,#c3c5cd 30%,#c3c5cd 70%,#eceef2)"></div>
<div style="left:6px;top:911px;width:1px;height:20px;background:linear-gradient(#eceef2,#c3c5cd 30%,#c3c5cd 70%,#eceef2)"></div>
<div style="left:8px;top:911px;width:1px;height:20px;background:linear-gradient(#eceef2,#c3c5cd 30%,#c3c5cd 70%,#eceef2)"></div>
<div style="left:80px;top:909px;width:1px;height:24px;background:#c9cad2"></div>
<div style="left:263px;top:909px;width:1px;height:24px;background:#c9cad2"></div>
<div style="left:1089px;top:905px;width:14px;height:32px;background:linear-gradient(#fdfdfe,#dfe0e6 55%,#ebecf0);border-radius:0 3px 3px 0"></div>
<div style="left:1088px;top:905px;width:1px;height:32px;background:#c9cad2"></div>
<svg style="left:0;top:904px" width="1104" height="34" viewBox="0 904 1104 34" shape-rendering="auto">
<!-- prev / next -->
<g fill="#b3b4c0"><rect x="149" y="915" width="2" height="12"/><path d="M161 915V927L152 921Z"/>
<rect x="284" y="915" width="2" height="12"/><path d="M274 915V927L283 921Z"/></g>
<!-- refresh -->
<rect x="327.5" y="914.5" width="12" height="12" fill="#fff" stroke="#3d3d48" stroke-width="1"/>
<rect x="329" y="916" width="9" height="2" fill="#9db7e6"/><rect x="329" y="919" width="2" height="6" fill="#9db7e6"/>
<circle cx="337.5" cy="924.5" r="4.6" fill="#fff"/>
<path d="M334.4 923.6A3.2 3.2 0 0 1 340 922.6" fill="none" stroke="#3aa64a" stroke-width="1.5"/><path d="M341.3 920.8V924H338.2Z" fill="#3aa64a"/>
<path d="M340.6 925.6A3.2 3.2 0 0 1 335 926.5" fill="none" stroke="#3aa64a" stroke-width="1.5"/><path d="M333.7 928.2V925H336.8Z" fill="#3aa64a"/>
<!-- printer + check -->
<path d="M429.5 921V915.5H434" fill="none" stroke="#3f434d" stroke-width="1"/>
<rect x="426" y="920" width="13" height="6.5" rx="1" fill="#454a55"/>
<rect x="429.5" y="923.5" width="6" height="5" fill="#fff" stroke="#454a55" stroke-width="1"/>
<rect x="434" y="913" width="8" height="8" fill="#3cab4e"/>
<path d="M435.6 916.9L437.4 918.7L440.6 914.8" fill="none" stroke="#fff" stroke-width="1.3"/>
<!-- printer -->
<rect x="539.5" y="913.5" width="7" height="7" fill="#e6ebf6" stroke="#8295c8" stroke-width="1"/>
<rect x="536.5" y="918.5" width="13" height="7" rx="1.5" fill="#dfe6f4" stroke="#6f84bd" stroke-width="1"/>
<rect x="538" y="920" width="10" height="2.2" fill="#35406e"/>
<rect x="539.5" y="923.5" width="7" height="4" fill="#f4f7fc" stroke="#7d91c6" stroke-width="1"/>
<rect x="541" y="925" width="4" height="1" fill="#7fb0e8"/>
<!-- pdf -->
<path d="M659.5 913.5H667L670.5 917V927.5H659.5Z" fill="#fff" stroke="#3d3d48" stroke-width="1"/>
<path d="M667 913.5V917H670.5" fill="none" stroke="#3d3d48" stroke-width="1"/>
<rect x="662" y="919" width="12" height="6" fill="#e0344c"/>
<path d="M663.5 924V920.3H665V922H663.5M666.3 920.3V923.8H667.6Q668.6 923.8 668.6 922Q668.6 920.3 667.6 920.3ZM670 924V920.3H672M670 922H671.6" fill="none" stroke="#fff" stroke-width="0.9"/>
<!-- doc + lock -->
<rect x="739.5" y="914.5" width="10" height="12" fill="#fff" stroke="#3d3d48" stroke-width="1"/>
<path d="M741 917.5H748M741 921.5H748" stroke="#e0344c" stroke-width="1"/><path d="M741 919.5H748M741 923.5H747" stroke="#8f9099" stroke-width="1"/>
<rect x="747" y="923" width="6" height="6" fill="#ff9a0a"/><path d="M748.5 923.5V922.3A1.5 1.5 0 0 1 751.5 922.3V923.5" fill="none" stroke="#ff9a0a" stroke-width="1.2"/>
<!-- unlock -->
<rect x="838" y="919" width="10" height="8" fill="#ff9a0a"/>
<path d="M843.5 919.5V917.5A3 3 0 0 1 849.5 917.5V918.6" fill="none" stroke="#ff9a0a" stroke-width="1.5"/>
<rect x="842.4" y="921" width="1.4" height="1.6" fill="#fff"/><rect x="842.4" y="923.6" width="1.4" height="1.8" fill="#fff"/>
<!-- email + -->
<rect x="930.5" y="914.5" width="11" height="9" fill="#fff" stroke="#3d3d48" stroke-width="1"/>
<path d="M935 918.5H940M937.5 916V921" stroke="#3cab4e" stroke-width="1.2"/>
<rect x="926" y="920" width="10" height="7.5" fill="#ff9a0a"/><path d="M926 920.5L931 924.3L936 920.5" fill="none" stroke="#ffe3b0" stroke-width="1"/>
<!-- AB pencil -->
<text x="1007" y="921" font-family="Liberation Sans, sans-serif" font-size="6.5" font-weight="bold" fill="#5a5b66">AB</text>
<path d="M1013.6 926.8L1014.4 924.4L1019.3 919.4L1021.1 921.2L1016.1 926.1Z" fill="#4d82d6"/>
<!-- overflow arrow -->
<path d="M1092 920.5H1099L1095.5 924.5Z" fill="#8a8b96"/>
</svg>
<span id="t247" style="top:911.94px;font-size:12px;color:#1e1e32;letter-spacing:-0.242px;left:25.00px;">Tổng: 13</span>
<div style="left:88px;top:908px;width:50px;height:26px;background:#fff;border:1px solid #b7bac5;border-top-color:#9c9fae;border-bottom-color:#cfd1d9;box-sizing:border-box"></div>
<svg style="left:126px;top:919px" width="7" height="4" viewBox="0 0 7 4"><path d="M0 0H7L3.5 4Z" fill="#1e1e2d"/></svg>
<span id="t248" style="top:912.06px;font-size:16px;color:#1e1e32;letter-spacing:-0.300px;transform:scaleX(0.9660);transform-origin:0 50%;left:93.00px;">50</span>
<span id="t249" style="top:910.94px;font-size:12px;color:#9a9ca6;letter-spacing:-0.300px;transform:scaleX(0.9675);transform-origin:0 50%;left:167.00px;">Prev</span>
<span id="t250" style="top:910.94px;font-size:12px;color:#1e1e32;letter-spacing:-0.156px;left:203.50px;">Trang 1/1</span>
<span id="t251" style="top:910.94px;font-size:12px;color:#9a9ca6;letter-spacing:-0.300px;transform:scaleX(0.9615);transform-origin:0 50%;left:292.50px;">Next</span>
<span id="t252" style="top:910.94px;font-size:12px;color:#1e1e32;letter-spacing:-0.322px;left:346.50px;">Làm mới (F5)</span>
<span id="t253" style="top:910.94px;font-size:12px;color:#1e1e32;letter-spacing:-0.147px;left:446.50px;">Đã in / Chưa in</span>
<span id="t254" style="top:910.94px;font-size:12px;color:#1e1e32;letter-spacing:0.007px;left:554.00px;">In kết quả(Ctrl+P)</span>
<span id="t255" style="top:910.94px;font-size:12px;color:#1e1e32;letter-spacing:-0.300px;transform:scaleX(0.9679);transform-origin:0 50%;left:679.00px;">Xuất PDF</span>
<span id="t256" style="top:910.94px;font-size:12px;color:#1e1e32;letter-spacing:-0.232px;left:757.50px;">Khóa kết quả</span>
<span id="t257" style="top:910.94px;font-size:12px;color:#1e1e32;letter-spacing:-0.154px;left:856.00px;">Mở kết quả</span>
<span id="t258" style="top:910.94px;font-size:12px;color:#1e1e32;letter-spacing:-0.401px;left:946.50px;">Gửi Email</span>
<span id="t259" style="top:910.94px;font-size:12px;color:#1e1e32;letter-spacing:-0.300px;transform:scaleX(0.9724);transform-origin:0 50%;left:1026.00px;">Sửa chỉ số</span>
</div></body></html>
